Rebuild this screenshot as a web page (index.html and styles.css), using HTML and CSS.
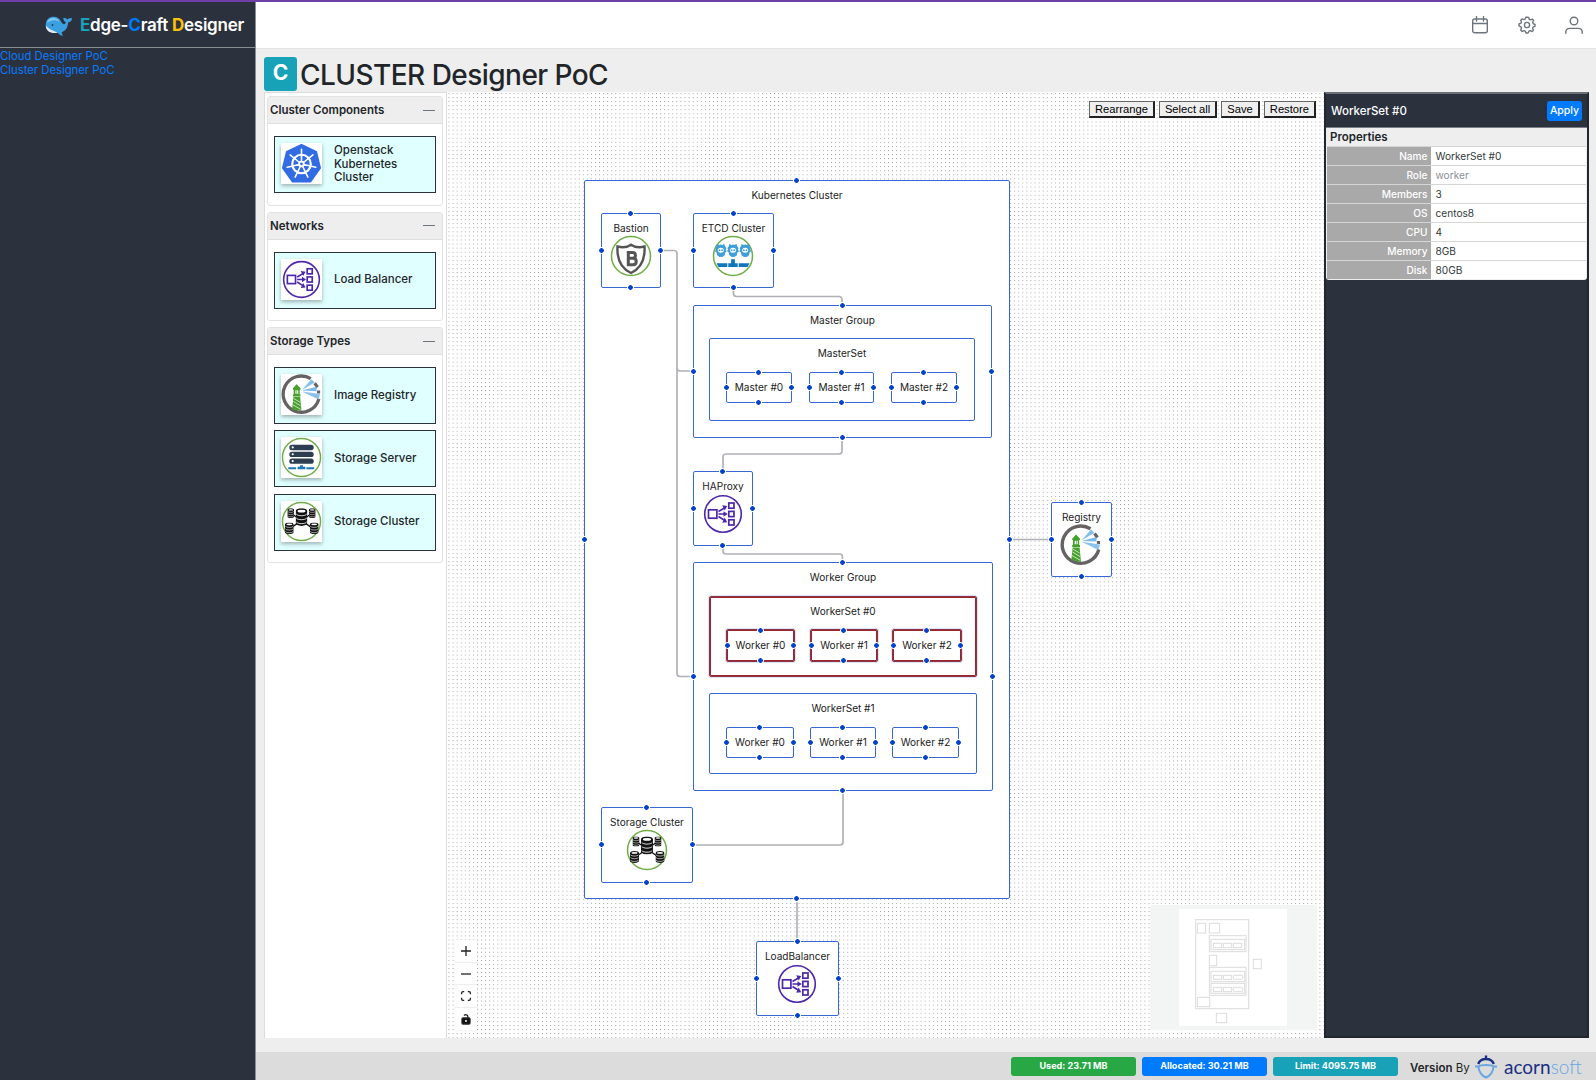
FILE: index.html
```html
<!DOCTYPE html>
<html lang="en">
<head>
<meta charset="utf-8">
<title>Edge-Craft Designer</title>
<link rel="stylesheet" href="styles.css">
</head>
<body>
<svg class="defs" aria-hidden="true">
  <symbol id="ic-lb" viewBox="0 0 42 42">
    <circle cx="21" cy="21" r="18.3" fill="#fff" stroke="#4d27aa" stroke-width="1.6"/>
    <g fill="none" stroke="#4d27aa" stroke-width="1.7">
      <rect x="6.5" y="16.8" width="8.4" height="8.4"/>
      <rect x="26.8" y="10" width="5.2" height="5.2"/><rect x="26.8" y="18.4" width="5.2" height="5.2"/><rect x="26.8" y="26.8" width="5.2" height="5.2"/>
      <path d="M16.5 18.5l6-3.5M16.5 21h6M16.5 23.5l6 3.800"/>
    </g>
    <path fill="#4d27aa" d="M20.2 12.2l5 .8-2.500 4.400zM21.500 18.200l4.200 2.800-4.200 2.800zM22.700 24.600l2.500 4.600-5 .6z"/>
  </symbol>
  <symbol id="ic-k8s" viewBox="0 0 42 42">
    <path fill="#326ce5" stroke="#326ce5" stroke-width="2" stroke-linejoin="round" d="M21 2L36 9.200 40 25.500 30 39.500H12L2 25.500 6 9.200z"/>
    <circle cx="21" cy="21.500" r="9.500" fill="none" stroke="#fff" stroke-width="2.200"/>
    <path stroke="#fff" stroke-width="1.600" stroke-linecap="round" d="M21 21.500V6.500M21 21.500L32.700 12.200M21 21.500L35.600 24.800M21 21.500L27.500 35M21 21.500L14.500 35M21 21.500L6.400 24.800M21 21.500L9.300 12.200"/>
    <circle cx="21" cy="21.500" r="3.300" fill="#fff"/><circle cx="21" cy="21.500" r="1.400" fill="#326ce5"/>
  </symbol>
  <symbol id="ic-registry" viewBox="0 0 42 42">
    <path fill="none" stroke="#666263" stroke-width="3.400" d="M30.500 4.800A18.600 18.600 0 1 0 38.800 25.500"/>
    <path fill="none" stroke="#666263" stroke-width="3.200" d="M34.500 9.500l3 4M38.500 17v3"/>
    <path fill="#5aa8e6" d="M21.500 16.500L31 5.500l3.500 3.200z" opacity=".75"/>
    <path fill="#5aa8e6" d="M21.500 17L36.500 13v4.600z" opacity=".8"/>
    <path fill="#5aa8e6" d="M21.500 17.800L40 20.500l-1.500 5.500z" opacity=".7"/>
    <path fill="#45a02c" d="M16 10.500l4 4.200v1.400h-.8v5H20v2h-7.800v-2h.8v-5h-.8v-1.400z"/>
    <path fill="#fff" d="M14.700 16.800h3v3.400h-3z"/><path fill="#45a02c" d="M15.900 16.800h.7v3.400h-.7z"/>
    <path fill="#45a02c" d="M12.600 23.500h7l1.400 14.500-9.600-2z"/>
    <path stroke="#fff" stroke-width=".7" d="M12.800 25l6.800 4M12.500 28l7.500 4.500M12 31.500l8.200 4.700"/>
  </symbol>
  <symbol id="ic-server" viewBox="0 0 42 42">
    <circle cx="21" cy="21" r="19.500" fill="#fff" stroke="#70ad47" stroke-width="1.500"/>
    <g fill="#2c3e50"><rect x="8.500" y="8" width="25" height="5.500" rx="2.700"/><rect x="8.500" y="15" width="25" height="5.500" rx="2.700"/><rect x="8.500" y="22" width="25" height="5.500" rx="2.700"/></g>
    <g fill="#fff"><circle cx="12" cy="10.700" r="1.100"/><circle cx="12" cy="17.700" r="1.100"/><circle cx="12" cy="24.700" r="1.100"/></g>
    <path fill="#1c75bc" d="M7.500 31h8v2h-8zM26 31h8v2h-8zM17 33v-2.500h2.500V29h3v1.500H25V33z"/>
  </symbol>
  <symbol id="db" viewBox="0 0 14 20" preserveAspectRatio="none">
    <path fill="#111" d="M0 3.200C0 1.400 3.100 0 7 0s7 1.400 7 3.200v13.600C14 18.600 10.900 20 7 20s-7-1.400-7-3.200z"/>
    <ellipse cx="7" cy="3.200" rx="4.800" ry="1.500" fill="#fff"/>
    <path fill="none" stroke="#fff" stroke-width="1" d="M.8 6.500c1.500 2.600 10.900 2.600 12.400 0M.8 11c1.500 2.600 10.900 2.600 12.400 0M.8 15.500c1.500 2.600 10.900 2.600 12.400 0"/>
  </symbol>
  <symbol id="ic-storage" viewBox="0 0 42 42">
    <circle cx="21" cy="21" r="19.500" fill="#fff" stroke="#70ad47" stroke-width="1.500"/>
    <path stroke="#111" stroke-width="1.300" d="M11 13l20 14M31 13L11 27"/>
    <use href="#db" x="15" y="7.500" width="12" height="18"/>
    <use href="#db" x="6.500" y="7.500" width="7" height="10"/><use href="#db" x="28.500" y="7.500" width="7" height="10"/>
    <use href="#db" x="4" y="22" width="9" height="12"/><use href="#db" x="29.500" y="22" width="9" height="12"/>
  </symbol>
  <symbol id="ic-bastion" viewBox="0 0 42 42">
    <circle cx="21" cy="21" r="19.500" fill="#fff" stroke="#70ad47" stroke-width="1.500"/>
    <path fill="none" stroke="#555" stroke-width="2.400" d="M7.500 11.500c5 1.200 10 .8 13.500-1.800 3.500 2.600 8.500 3 13.500 1.800.7 12-3 21.500-13.500 26.500C10.500 33 6.800 23.500 7.500 11.500z"/>
    <path fill="none" stroke="#555" stroke-width="3" d="M18.300 17.600h4.200c3.900 0 3.900 5.700 0 5.700h-4.200 4.800c4.200 0 4.200 6.500 0 6.500h-4.800z"/>
  </symbol>
  <symbol id="gopher" viewBox="0 0 12 14">
    <path fill="#419eda" d="M6 1l1.700.6L9.500.2l.6 2.400 1.600 2.200-.8 1 1.100 2-1.600 1.100-.5 2.800-1.500 1-1 1.100L6 13.200l-1.200.6-1-1.100-1.500-1-.5-2.800L0 7.800l1.100-2-.8-1 1.600-2.200.6-2.400 1.800 1.400z"/>
    <ellipse cx="6" cy="6.800" rx="3" ry="2.500" fill="#fff"/><circle cx="4.700" cy="6.700" r=".9" fill="#419eda"/><circle cx="7.300" cy="6.700" r=".9" fill="#419eda"/>
  </symbol>
  <symbol id="ic-etcd" viewBox="0 0 42 42">
    <circle cx="21" cy="21" r="19.500" fill="#fff" stroke="#70ad47" stroke-width="1.500"/>
    <use href="#gopher" x="2.800" y="8.500" width="12" height="14"/><use href="#gopher" x="15" y="8.500" width="12" height="14"/><use href="#gopher" x="27.200" y="8.500" width="12" height="14"/>
    <path fill="#0f75bc" d="M4.500 28.300h10.800v3.600H6.500zM26.700 28.300h10.800l-2 3.600h-8.800zM16.300 28.300h2.800V24.300h3.800v4h2.800v3.600h-9.400z"/>
  </symbol>
</svg>

<div class="app">
  <aside class="sidebar">
    <div class="brand">
      <svg class="whale" viewBox="0 0 28 21">
        <path fill="#3aa0e0" d="M.8 8C1.500 2.500 5 .6 9 .8c6 .3 6.500 5 8.500 6.800 1.500 1.200 3 .6 3.200-1.600-1.500-.6-2.300-2-2.500-3.800 2-.4 3.500.2 4.300 1.400.8-1.300 2.600-1.700 4.800-1.200-.6 2.400-2 3.700-4.200 4-.2 4.600-2.200 8.200-6.500 9.800l1.200 3.800c-2.400-.4-3.900-1.700-4.800-3.300C6 17.500 0 15 .8 8z"/>
        <path fill="#7cc6f0" d="M2 7c.8-4 3.500-5.300 7-5 3 .2 5 2 5.500 4-4-2.500-8-2.300-12.500 1z"/>
        <path fill="#e6eaee" d="M.8 9.500c2 3 6.500 5 12 7.200C6.500 18 .8 15.500.8 9.500z"/>
        <circle cx="7.500" cy="9" r=".9" fill="#173a56"/>
      </svg>
      <span class="brand-name"><b class="e">E</b>dge-<b class="c">C</b>raft <b class="d">D</b>esigner</span>
    </div>
    <nav class="menu"><a>Cloud Designer PoC</a><a>Cluster Designer PoC</a></nav>
  </aside>

  <div class="main">
    <header class="topbar">
      <svg viewBox="0 0 18 18"><rect x="1.700" y="3" width="14.600" height="13.800" rx="2"/><path d="M1.700 7.500h14.600M5.500 .5v4.500M12.500 .5v4.500"/></svg>
      <svg viewBox="0 0 18 18"><path d="M9 1.100l1.700.3.500 1.900 1.200.6 1.900-.8 1.300 1.400-.9 1.800.4 1.300 1.900.9v1.800l-1.900.8-.5 1.200.8 1.900-1.400 1.300-1.700-.8-1.400.5-.8 1.800H8l-.8-1.900-1.200-.5-1.900.8-1.400-1.400.8-1.800-.5-1.300L1 9.900V8l1.900-.8.6-1.200-.8-1.800 1.400-1.300 1.700.7 1.300-.5.800-1.900z"/><circle cx="9" cy="9" r="2.600"/></svg>
      <svg viewBox="0 0 18 18"><circle cx="9" cy="5" r="3.800"/><path d="M.8 17.200v-1c0-2.200 1.600-3.800 3.900-3.800h8.600c2.300 0 3.900 1.600 3.900 3.800v1"/></svg>
    </header>

    <h1 class="title"><span class="badge">C</span><span class="title-text">CLUSTER Designer PoC</span></h1>

    <div class="workspace">
      <div class="palette">
        <section class="group">
          <h2>Cluster Components<i></i></h2>
          <div class="items">
            <div class="item"><span class="thumb"><svg><use href="#ic-k8s"/></svg></span><span>Openstack<br>Kubernetes<br>Cluster</span></div>
          </div>
        </section>
        <section class="group">
          <h2>Networks<i></i></h2>
          <div class="items">
            <div class="item"><span class="thumb"><svg><use href="#ic-lb"/></svg></span><span>Load Balancer</span></div>
          </div>
        </section>
        <section class="group">
          <h2>Storage Types<i></i></h2>
          <div class="items">
            <div class="item"><span class="thumb"><svg><use href="#ic-registry"/></svg></span><span>Image Registry</span></div>
            <div class="item"><span class="thumb"><svg><use href="#ic-server"/></svg></span><span>Storage Server</span></div>
            <div class="item"><span class="thumb"><svg><use href="#ic-storage"/></svg></span><span>Storage Cluster</span></div>
          </div>
        </section>
      </div>

      <div class="canvas">
        <svg class="grid" width="878" height="946">
          <defs><pattern id="dots" x="1.500" y="1" width="4.070" height="4.070" patternUnits="userSpaceOnUse"><circle cx=".5" cy=".5" r=".5" fill="#81818a"/></pattern></defs>
          <rect width="878" height="946" fill="url(#dots)"/>
        </svg>
        <div class="viewport">
          <div class="node cluster ports">Kubernetes Cluster</div>
          <div class="node group-master ports">Master Group</div>
          <div class="node set-master">MasterSet</div>
          <div class="node group-worker ports">Worker Group</div>
          <div class="node set-w0 selected">WorkerSet #0</div>
          <div class="node set-w1">WorkerSet #1</div>
          <svg class="edges" width="1596" height="1080">
            <path d="M663 250.500H674a3 3 0 0 1 3 3V368a3 3 0 0 0 3 3H690"/>
            <path d="M677 368V673.500a3 3 0 0 0 3 3H690"/>
            <path d="M733.500 287V293.500a3 3 0 0 0 3 3H839a3 3 0 0 1 3 3V302"/>
            <path d="M842 441V451a3 3 0 0 1-3 3H726a3 3 0 0 0-3 3V471"/>
            <path d="M723 545V551a3 3 0 0 0 3 3H839.500a3 3 0 0 1 3 3V559"/>
            <path d="M692 845H840a3 3 0 0 0 3-3V794"/>
            <path d="M1013 539.500H1051"/>
            <path d="M797 902V941"/>
          </svg>
          <div class="node bastion ports">Bastion<svg><use href="#ic-bastion"/></svg></div>
          <div class="node etcd ports">ETCD Cluster<svg><use href="#ic-etcd"/></svg></div>
          <div class="node m0 leaf ports">Master #0</div>
          <div class="node m1 leaf ports">Master #1</div>
          <div class="node m2 leaf ports">Master #2</div>
          <div class="node haproxy ports">HAProxy<svg><use href="#ic-lb"/></svg></div>
          <div class="node registry ports">Registry<svg><use href="#ic-registry"/></svg></div>
          <div class="node w00 leaf ports selected">Worker #0</div>
          <div class="node w01 leaf ports selected">Worker #1</div>
          <div class="node w02 leaf ports selected">Worker #2</div>
          <div class="node w10 leaf ports">Worker #0</div>
          <div class="node w11 leaf ports">Worker #1</div>
          <div class="node w12 leaf ports">Worker #2</div>
          <div class="node storage ports">Storage Cluster<svg><use href="#ic-storage"/></svg></div>
          <div class="node lb ports">LoadBalancer<svg><use href="#ic-lb"/></svg></div>
        </div>

        <div class="toolbar"><button>Rearrange</button><button>Select all</button><button>Save</button><button>Restore</button></div>

        <div class="controls">
          <span><svg viewBox="0 0 10 10"><path d="M5 0v10M0 5h10"/></svg></span>
          <span><svg viewBox="0 0 10 10"><path d="M0 5h10"/></svg></span>
          <span><svg viewBox="0 0 10 10"><path d="M.6 3.200V2a1.400 1.400 0 0 1 1.400-1.400h1.200M6.800.6H8A1.400 1.400 0 0 1 9.400 2v1.200M9.400 6.800V8A1.400 1.400 0 0 1 8 9.400H6.800M3.200 9.400H2A1.400 1.400 0 0 1 .6 8V6.800"/></svg></span>
          <span><svg viewBox="0 0 10 10"><rect class="solid" x="1" y="4" width="8" height="6" rx="1"/><path d="M3 1.500c1.200-1.300 3.800-1 3.900 1.200V4"/><circle cx="5" cy="7" r="1" class="hole"/></svg></span>
        </div>

        <svg class="minimap" width="167" height="125" viewBox="30 30 501 375">
          <path fill="#f3f5f5" d="M30 30h501v375H30z"/><path fill="#fff" d="M117 42h324v350H117z"/>
          <g fill="none" stroke="#dcdcdc" stroke-width="3">
            <rect x="167" y="74" width="159" height="267"/>
            <rect x="172" y="85" width="25" height="29"/><rect x="208" y="85" width="31" height="29"/>
            <rect x="208" y="122" width="110" height="48"/><rect x="213" y="133" width="101" height="31"/>
            <rect x="220" y="145" width="25" height="13"/><rect x="250" y="145" width="25" height="13"/><rect x="280" y="145" width="25" height="13"/>
            <rect x="208" y="181" width="22" height="31"/>
            <rect x="208" y="217" width="110" height="84"/><rect x="213" y="229" width="101" height="31"/><rect x="213" y="265" width="101" height="30"/>
            <rect x="220" y="241" width="25" height="12"/><rect x="250" y="241" width="25" height="12"/><rect x="280" y="241" width="28" height="12" rx="3"/>
            <rect x="220" y="277" width="25" height="13"/><rect x="250" y="277" width="25" height="13"/><rect x="280" y="277" width="28" height="13" rx="3"/>
            <rect x="172" y="307" width="37" height="28"/><rect x="229" y="355" width="31" height="28"/><rect x="340" y="193" width="24" height="28"/>
          </g>
        </svg>
      </div>

      <div class="inspector">
        <div class="insp-head"><span>WorkerSet #0</span><span class="apply">Apply</span></div>
        <div class="props">
          <h3>Properties</h3>
          <dl>
            <dt>Name</dt><dd>WorkerSet #0</dd>
            <dt>Role</dt><dd class="muted">worker</dd>
            <dt>Members</dt><dd>3</dd>
            <dt>OS</dt><dd>centos8</dd>
            <dt>CPU</dt><dd>4</dd>
            <dt>Memory</dt><dd>8GB</dd>
            <dt>Disk</dt><dd>80GB</dd>
          </dl>
        </div>
      </div>
    </div>

    <footer class="footer">
      <span class="pill green">Used: 23.71 MB</span><span class="pill blue">Allocated: 30.21 MB</span><span class="pill teal">Limit: 4095.75 MB</span>
      <span class="version"><b>Version</b> By</span>
      <svg class="acorn" viewBox="0 0 22 24"><path fill="none" stroke="#1a2f82" stroke-width="2.400" d="M3.200 9C4.500 5.500 7.500 4 11 4s6.500 1.500 7.800 5M11 4V.5"/><path fill="none" stroke="#6aa6e0" stroke-width="2" d="M0 11.500h3.500C6 9.500 16 9.500 18.500 11.500H22M3.500 11.500c0 5 3.500 9.500 7.500 11 4-1.500 7.500-6 7.500-11"/></svg>
      <span class="acornsoft"><b>acorn</b>soft</span>
    </footer>
  </div>
</div>
</body>
</html>
```
FILE: styles.css
```css
* { box-sizing: border-box; }
body { margin: 0; font-family: Inter, "Liberation Sans", sans-serif; color: #212529; background: #eee; }
h1, h2, h3, dl, dd { margin: 0; }
.defs { position: absolute; width: 0; height: 0; }

.app { display: flex; width: 1596px; height: 1080px; border-top: 2px solid #7040a8; overflow: hidden; }

.sidebar { width: 256px; flex: none; background: #2b323e; border-right: 1px solid #8a8d92; }
.brand { height: 46px; display: flex; align-items: center; gap: 7px; padding-left: 45px; border-bottom: 1px solid #8a8d92; }
.whale { width: 28px; height: 21px; margin-top: 3px; }
.brand-name { color: #fff; font-size: 17px; font-weight: 600; letter-spacing: -.25px; white-space: nowrap; }
.brand-name b { font-weight: 700; }
.e { color: #17a2b8; } .c { color: #007bff; } .d { color: #ffc107; }
.menu { display: flex; flex-direction: column; font-size: 11.300px; line-height: 14.200px; padding-top: 1px; color: #0a7bff; }

.main { flex: 1; display: flex; flex-direction: column; min-width: 0; }
.topbar { height: 47px; flex: none; background: #fff; border-bottom: 1px solid #e2e2e2; display: flex; justify-content: flex-end; align-items: center; gap: 29px; padding-right: 13px; }
.topbar svg { width: 18px; height: 18px; fill: none; stroke: #6c757d; stroke-width: 1.400; stroke-linecap: round; stroke-linejoin: round; }

.title { height: 43px; flex: none; display: flex; align-items: flex-end; padding-left: 8px; font-weight: 500; }
.badge { width: 33px; height: 34px; margin-bottom: 1px; background: #17a2b8; color: #fff; border-radius: 3px; font-size: 21px; font-weight: 700; line-height: 31px; text-align: center; }
.title-text { font-size: 28px; line-height: 34px; margin-left: 3px; letter-spacing: -.54px; white-space: nowrap; }

.workspace { flex: none; height: 946px; display: flex; padding: 0 7px 0 8px; }
.palette { width: 183px; flex: none; background: #fff; border: 1px solid #dcdcdc; border-bottom: 0; padding: 3px 3px 3px 2px; display: flex; flex-direction: column; gap: 6px; }
.group { border: 1px solid #e2e2e2; border-radius: 3px; }
.group h2 { height: 27px; background: #eee; border-bottom: 1px solid #dfdfdf; font-size: 11.500px; font-weight: 600; display: flex; align-items: center; justify-content: space-between; padding: 0 7px 0 2px; }
.group h2 i { width: 12px; height: 1px; background: #6c757d; }
.items { padding: 12px 6px 11.600px; display: flex; flex-direction: column; gap: 6.300px; }
.item { height: 57px; border: 1px solid #2b323e; background: #e0ffff; display: flex; align-items: center; gap: 12px; padding-left: 6px; font-size: 11.500px; font-weight: 500; line-height: 13.700px; }
.thumb { width: 41px; height: 41px; margin-top: -2px; background: #fff; box-shadow: 0 2px 4px rgba(0,0,0,.3); }
.thumb svg { width: 41px; height: 41px; display: block; }

.canvas { position: relative; flex: 1; background: #fff; overflow: hidden; }
.grid { position: absolute; left: 0; top: 0; }
.viewport { position: absolute; left: -447px; top: -92px; width: 1596px; height: 1080px; }
.edges { position: absolute; left: 0; top: 0; fill: none; stroke: #b1b1b7; stroke-width: 1.700; }
.node { position: absolute; background: #fff; border: 1px solid #3767d9; border-radius: 2px; padding-top: 7.400px; font-size: 10.050px; line-height: 14px; text-align: center; color: #222; white-space: nowrap; }
.node svg { position: absolute; left: 50%; top: 20.500px; width: 42px; height: 42px; margin-left: -21.300px; }
.leaf { padding-top: 7px; }
.ports::after { content: ""; position: absolute; inset: -4px; --dot: radial-gradient(circle, #0041d0 2px, #fff 2.600px 3px, transparent 3.500px); --cx: calc(50% - .5px); background: var(--dot) var(--cx) 0 / 7px 7px no-repeat, var(--dot) var(--cx) 100% / 7px 7px no-repeat, var(--dot) 0 var(--cx) / 7px 7px no-repeat, var(--dot) 100% var(--cx) / 7px 7px no-repeat; }
.selected { border-color: #8f3345; box-shadow: inset 0 0 0 1px #98262c, 0 0 0 1px rgba(0,65,208,.14); }
.selected.ports::after { inset: -3px; }

.cluster { left: 584px; top: 180px; width: 426px; height: 719px; }
.bastion { left: 601px; top: 213px; width: 60px; height: 75px; }
.etcd { left: 693px; top: 213px; width: 81px; height: 75px; }
.group-master { left: 693px; top: 305px; width: 299px; height: 133px; }
.set-master { left: 709px; top: 338px; width: 266px; height: 83px; }
.m0, .m1, .m2 { top: 372px; height: 31px; }
.m0 { left: 726px; width: 66px; }
.m1 { left: 809px; width: 65px; }
.m2 { left: 891px; width: 66px; }
.haproxy { left: 693px; top: 471px; width: 60px; height: 75px; }
.group-worker { left: 693px; top: 562px; width: 300px; height: 229px; }
.set-w0 { left: 709px; top: 596px; width: 268px; height: 81px; }
.w00, .w01, .w02 { top: 629px; height: 33px; padding-top: 8px; }
.w00 { left: 726px; width: 69px; }
.w01 { left: 810px; width: 68px; }
.w02 { left: 892px; width: 70px; }
.set-w1 { left: 709px; top: 693px; width: 268px; height: 81px; }
.w10, .w11, .w12 { top: 727px; height: 31px; }
.w10 { left: 726px; width: 68px; }
.w11 { left: 810px; width: 66px; }
.w12 { left: 892px; width: 67px; }
.storage { left: 601px; top: 807px; width: 92px; height: 76px; }
.lb { left: 756px; top: 941px; width: 83px; height: 75px; }
.registry { left: 1051px; top: 502px; width: 61px; height: 75px; }

.toolbar { position: absolute; top: 9px; right: 8px; display: flex; gap: 4px; }
.toolbar button { height: 17px; padding: 0 5px; border: 1px solid #666; border-right: 2px solid #222; border-bottom: 2px solid #222; background: #efefef; color: #000; font: 11.200px/13px "Liberation Sans", Arial, sans-serif; }

.controls { position: absolute; left: 8px; bottom: 8.500px; width: 22px; display: flex; flex-direction: column; gap: 1px; background: #eee; box-shadow: 0 0 2px rgba(0,0,0,.08); }
.controls span { height: 21.600px; background: #fefefe; display: flex; align-items: center; justify-content: center; }
.controls svg { width: 10px; height: 10px; fill: none; stroke: #222; stroke-width: 1.300; overflow: visible; }
.controls .solid { fill: #111; }
.controls .hole { fill: #fff; stroke: none; }
.minimap { position: absolute; right: 7px; bottom: 8px; }

.inspector { width: 265px; flex: none; background: #2b323e; border: 2px solid #22262f; border-top-color: #6a6e75; }
.insp-head { height: 33.500px; padding: 1px 5px 0; display: flex; align-items: center; justify-content: space-between; border-bottom: 1px solid #7a7d83; color: #fff; font-size: 11.500px; font-weight: 500; }
.apply { width: 35px; height: 20px; border-radius: 3px; background: #007bff; font-size: 10.500px; line-height: 20px; text-align: center; }
.props { background: #eee; border-radius: 0 0 3px 3px; padding: 0 1px 1px; overflow: hidden; }
.props h3 { height: 18px; font-size: 11.500px; font-weight: 600; line-height: 19.500px; padding-left: 3px; }
.props dl { display: grid; grid-template-columns: 103.500px 1fr; grid-auto-rows: 19.150px; font-size: 10.150px; line-height: 19px; }
.props dt { background: #a9a9a9; color: #fff; font-weight: 500; text-align: right; padding-right: 3px; border-top: 1px solid #d5d5d5; }
.props dd { background: #fff; color: #343a40; padding-left: 5px; border-top: 1px solid #d5d5d5; }
.props .muted { color: #8b9096; }

.footer { margin-top: 14px; flex: 1; background: #dcdcdc; display: flex; align-items: center; padding: 1px 16px 0 0; justify-content: flex-end; }
.pill { width: 125px; height: 19px; margin-right: 6px; border-radius: 3px; color: #fff; font-size: 9.100px; font-weight: 700; line-height: 18.500px; text-align: center; }
.green { background: #28a745; } .blue { background: #007bff; } .teal { background: #17a2b8; }
.version { width: 60px; margin: 3px 5px 0 6px; font-size: 11.500px; white-space: nowrap; }
.version b { font-weight: 600; }
.acorn { width: 22px; height: 24px; margin-right: 7px; }
.acornsoft { width: 76px; font: 300 19px/20px Lato, sans-serif; color: #6aa6e0; white-space: nowrap; }
.acornsoft b { font-weight: 400; color: #1a2f82; }
```
